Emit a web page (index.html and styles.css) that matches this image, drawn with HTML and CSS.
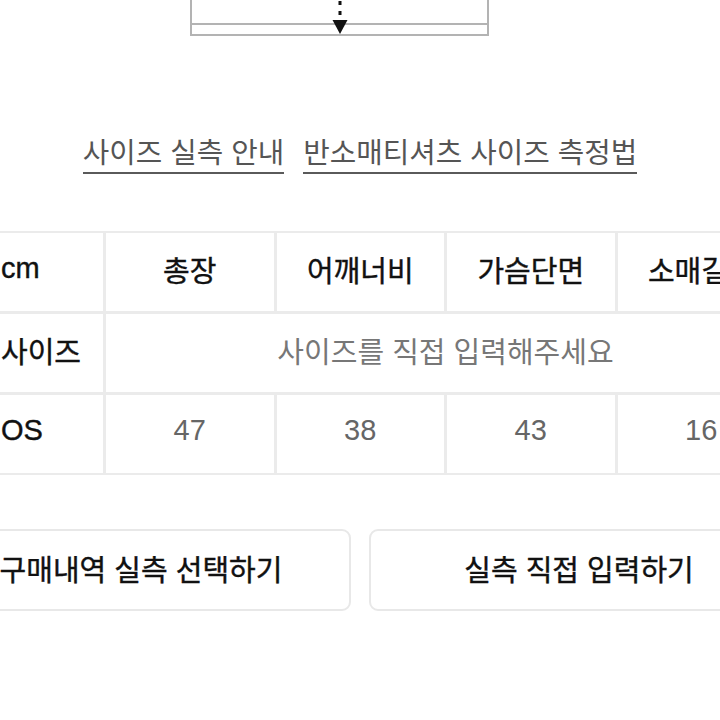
FILE: index.html
```html
<!DOCTYPE html>
<html lang="ko">
<head>
<meta charset="utf-8">
<link rel="stylesheet" href="styles.css">
</head>
<body>
<div class="page">
  <div class="diagram">
    <svg width="300" height="37" viewBox="0 0 300 37">
      <g stroke="#b3b3b3" stroke-width="2" fill="none">
        <line x1="2" y1="0" x2="2" y2="36"/>
        <line x1="299" y1="0" x2="299" y2="36"/>
        <line x1="2" y1="24" x2="299" y2="24"/>
        <line x1="1" y1="35" x2="300" y2="35"/>
      </g>
      <rect x="149.5" y="1" width="3" height="4" fill="#111"/>
      <rect x="149.5" y="11" width="3" height="4" fill="#111"/>
      <polygon points="143.5,20 158.5,20 151,34" fill="#111"/>
    </svg>
  </div>

  <div class="links">
    <a class="link">사이즈 실측 안내</a>
    <a class="link">반소매티셔츠 사이즈 측정법</a>
  </div>

  <div class="table">
    <div class="cell first head">cm</div>
    <div class="cell head">총장</div>
    <div class="cell head">어깨너비</div>
    <div class="cell head">가슴단면</div>
    <div class="cell head">소매길이</div>

    <div class="cell first head">사이즈</div>
    <div class="cell wide muted">사이즈를 직접 입력해주세요</div>

    <div class="cell first head">OS</div>
    <div class="cell value">47</div>
    <div class="cell value">38</div>
    <div class="cell value">43</div>
    <div class="cell value">16</div>
  </div>

  <div class="buttons">
    <button class="btn">구매내역 실측 선택하기</button>
    <button class="btn">실측 직접 입력하기</button>
  </div>
</div>
</body>
</html>
```

FILE: styles.css
```css
* { box-sizing: border-box; }

html, body {
  margin: 0;
  padding: 0;
  background: #ffffff;
}

body {
  width: 720px;
  height: 720px;
  overflow: hidden;
  font-family: "Liberation Sans", "Noto Sans CJK KR", sans-serif;
  color: #111111;
}

.page {
  width: 720px;
  height: 720px;
  overflow: hidden;
}

.diagram {
  height: 37px;
  padding-left: 189px;
}

.diagram svg {
  display: block;
}

.links {
  display: flex;
  justify-content: center;
  gap: 19px;
  margin-top: 98px;
}

.link {
  font-size: 28.8px;
  line-height: 36px;
  color: #555555;
  text-decoration: none;
  border-bottom: 2px solid #5a5a5a;
  padding-bottom: 1px;
}

.table {
  display: grid;
  grid-template-columns: 133px repeat(4, 167.5px);
  grid-auto-rows: 78px;
  gap: 3px;
  padding: 2px;
  background: #ebebeb;
  width: max-content;
  margin-left: -32px;
  margin-top: 57px;
}

.cell {
  background: #ffffff;
  display: flex;
  align-items: center;
  justify-content: center;
  font-size: 29px;
  white-space: nowrap;
  padding-bottom: 7px;
}

.cell.first {
  justify-content: flex-start;
  padding-left: 31px;
}

.head {
  color: #111111;
  -webkit-text-stroke: 0.4px #111111;
}

.wide {
  grid-column: 2 / span 4;
}

.muted {
  color: #777777;
}

.value {
  color: #666666;
}

.buttons {
  display: flex;
  gap: 18px;
  margin-left: -69px;
  margin-top: 54px;
}

.btn {
  flex: 0 0 420px;
  height: 82px;
  background: #ffffff;
  border: 2px solid #e8e8e8;
  border-radius: 9px;
  font-family: "Liberation Sans", "Noto Sans CJK KR", sans-serif;
  font-size: 29px;
  font-weight: 400;
  color: #111111;
  -webkit-text-stroke: 0.4px #111111;
  padding: 0 0 5px 0;
}
```
